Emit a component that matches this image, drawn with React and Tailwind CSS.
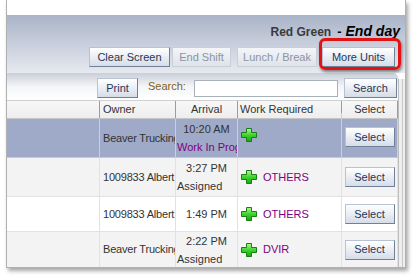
import React from 'react';

const btn =
  'h-[20px] px-0 whitespace-nowrap border border-t-[#b7c3d3] border-l-[#b7c3d3] border-r-[#6f8097] border-b-[#6f8097] bg-gradient-to-b from-[#ffffff] to-[#d6dde8] text-[#1f3756] text-[11px] leading-none flex items-center justify-center';
const btnOff =
  'h-[20px] px-0 whitespace-nowrap border border-[#c9cfd8] bg-gradient-to-b from-[#f3f5f8] to-[#dfe3ea] text-[#8b94a3] text-[11px] leading-none flex items-center justify-center';

function Plus() {
  return (
    <svg width="16" height="14" viewBox="0 0 16 14" className="shrink-0">
      <defs>
        <linearGradient id="pg" x1="0" y1="0" x2="0" y2="1">
          <stop offset="0" stopColor="#b6f59a" />
          <stop offset="0.5" stopColor="#3fd42c" />
          <stop offset="1" stopColor="#16a514" />
        </linearGradient>
      </defs>
      <path
        d="M5.5 0.5h5v4h5v5h-5v4h-5v-4h-5v-5h5z"
        fill="url(#pg)"
        stroke="#1b7d16"
        strokeWidth="1"
        strokeLinejoin="round"
      />
    </svg>
  );
}

const rows = [
  { owner: 'Beaver Trucking', time: '10:20 AM', status: 'Work In Progress', purple: true, work: '', h: 'h-[39px]', bg: 'bg-[#9eaac7]', sel: true },
  { owner: '1009833 Albert Kraft', time: '3:27 PM', status: 'Assigned', work: 'OTHERS', h: 'h-[39px]', bg: 'bg-[#f3f3f3]' },
  { owner: '1009833 Albert Kraft', time: '1:49 PM', status: '', work: 'OTHERS', h: 'h-[35px]', bg: 'bg-white' },
  { owner: 'Beaver Trucking', time: '2:22 PM', status: 'Assigned', work: 'DVIR', h: 'h-[36px]', bg: 'bg-[#f3f3f3]' },
];

export default function App() {
  return (
    <div className="w-[415px] h-[276px] bg-white overflow-hidden font-['Liberation_Sans',Arial,sans-serif]">
      <div className="ml-[6px] w-[400px] h-[268px] border border-t-0 border-[#b0b0b0] bg-white shadow-[2px_3px_4px_rgba(0,0,0,0.35)] flex flex-col overflow-hidden">
        <div className="h-[15px] shrink-0" />
        <div className="h-[58px] shrink-0 bg-gradient-to-b from-[#aab4c8] to-[#e6e9ef] flex flex-col items-end pr-[7px]">
          <div className="h-[16px] mt-[8px] whitespace-nowrap flex items-baseline leading-[16px]">
            <span className="text-[12px] font-bold text-[#3a3a3a]">Red Green</span>
            <span className="text-[13px] font-bold text-black ml-[6px]">-</span>
            <span className="text-[14px] font-bold italic text-black ml-[4px] -mr-[2px]">End day</span>
          </div>
          <div className="flex items-center mt-[8px] mr-[3px]">
            <button className={`${btn} w-[81px]`}>Clear Screen</button>
            <button className={`${btnOff} w-[59px] ml-[2px]`}>End Shift</button>
            <button className={`${btnOff} w-[80px] ml-[6px]`}>Lunch / Break</button>
            <div className="relative ml-[5px]">
              <button className={`${btn} w-[73px]`}>More Units</button>
              <div className="absolute -left-[3px] -right-[6px] -top-[9px] -bottom-[3px] border-[3px] border-[#e41212] rounded-[6px] shadow-[1px_2px_3px_rgba(0,0,0,0.45)]" />
            </div>
          </div>
        </div>

        <div className="flex flex-1 min-h-0">
          <div className="w-[391px] shrink-0 flex flex-col">
            <div className="h-[27px] shrink-0 bg-gradient-to-b from-[#c9ced8] via-[#f4f5f7] to-white flex items-end pb-[2px] rounded-tr-[5px]">
              <button className={`${btn} w-[41px] ml-[90px] h-[20px]`}>Print</button>
              <span className="ml-[10px] text-[11px] text-[#7d5f12] mb-[4px]">Search:</span>
              <div className="ml-[8px] w-[144px] h-[17px] border border-[#a9b0ba] bg-white mb-[1px]" />
              <button className={`${btn} w-[53px] ml-[6px]`}>Search</button>
            </div>

            <div className="grid grid-cols-[93px_76px_62px_104px_56px] h-[19px] shrink-0 bg-gradient-to-b from-[#f7f7f7] to-[#eeeeee] border-b border-[#c4c4c4] border-t border-t-[#d0d0d0] text-[11px] text-[#333]">
              <div className="border-r border-[#9c9c9c]" />
              <div className="border-r border-[#9c9c9c] pl-[3px] leading-[17px]">Owner</div>
              <div className="border-r border-[#9c9c9c] text-center leading-[17px]">Arrival</div>
              <div className="border-r border-[#9c9c9c] pl-[2px] leading-[17px]">Work Required</div>
              <div className="border-r border-[#9c9c9c] text-center leading-[17px]">Select</div>
            </div>

            {rows.map((r, i) => (
              <div
                key={i}
                className={`grid grid-cols-[93px_76px_62px_104px_56px] shrink-0 ${r.h} ${r.bg} border-b ${r.sel ? 'border-[#c5cbd9]' : 'border-[#e2e2e2]'} text-[11px] text-[#333]`}
              >
                <div className={`border-r ${r.sel ? 'border-[#c9d0df]' : 'border-[#e2e2e2]'}`} />
                <div className={`border-r ${r.sel ? 'border-[#c9d0df]' : 'border-[#e2e2e2]'} pl-[3px] flex items-center overflow-hidden whitespace-nowrap tracking-[-0.2px]`}>
                  {r.owner}
                </div>
                <div className={`border-r ${r.sel ? 'border-[#c9d0df]' : 'border-[#e2e2e2]'} flex flex-col justify-center overflow-hidden whitespace-nowrap leading-[18px]`}>
                  <div className="text-center">{r.time}</div>
                  {r.status && (
                    <div className={`pl-[1px] ${r.purple ? 'text-[#800080]' : ''}`}>{r.status}</div>
                  )}
                </div>
                <div className={`border-r ${r.sel ? 'border-[#c9d0df]' : 'border-[#e2e2e2]'} flex items-center pl-[3px] gap-[6px] text-[#800080] ${r.sel ? '-mt-[6px]' : ''}`}>
                  <Plus />
                  {r.work && <span>{r.work}</span>}
                </div>
                <div className={`border-r ${r.sel ? 'border-[#c9d0df]' : 'border-[#e2e2e2]'} flex items-center justify-center`}>
                  <button className={`${btn} w-[50px] ${r.sel ? '-mt-[2px]' : ''}`}>Select</button>
                </div>
              </div>
            ))}
          </div>
          <div className="flex-1 mt-[6px] border-l border-[#bdbdbd] bg-[#eeeeee] flex">
            <div className="ml-[3px] h-full border-l border-[#c8c8c8]" />
          </div>
        </div>
      </div>
    </div>
  );
}
